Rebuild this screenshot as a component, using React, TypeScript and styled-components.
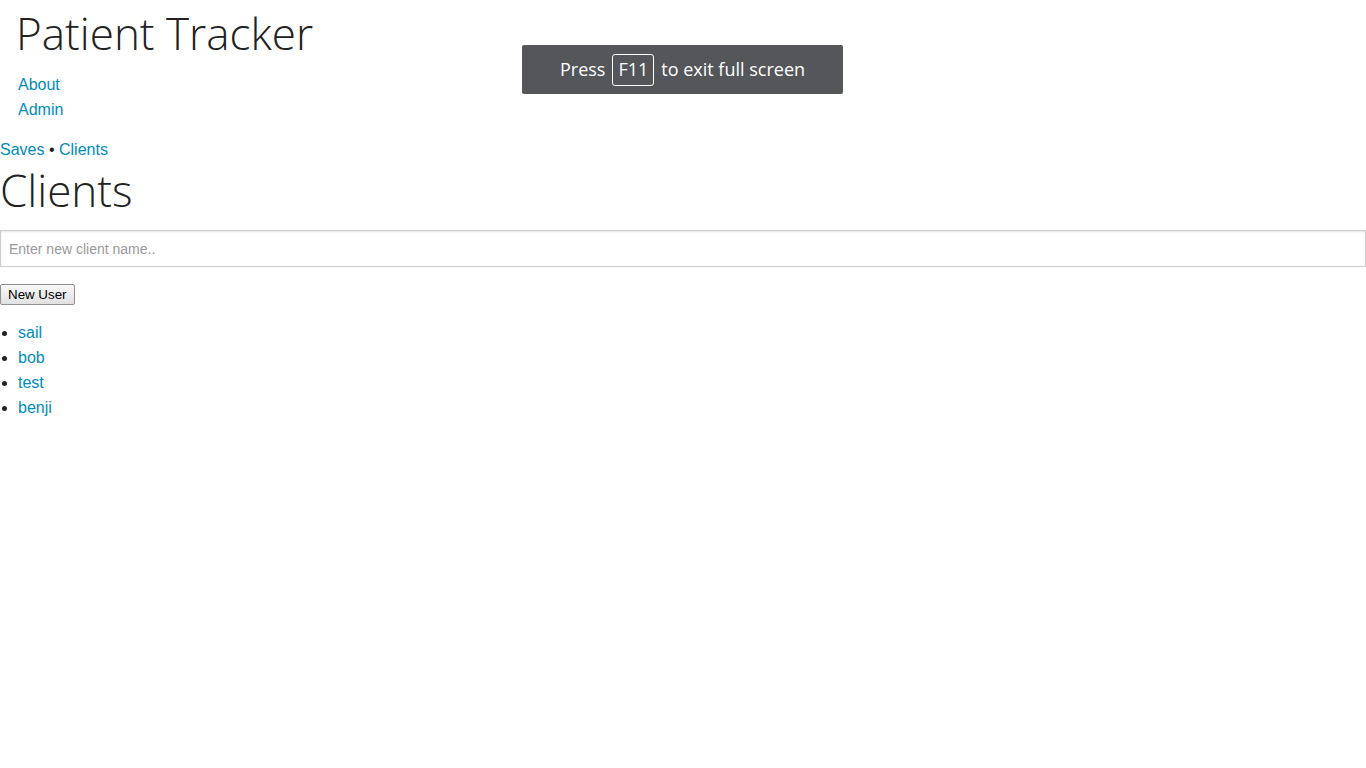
import React, { useState } from 'react';
import styled, { createGlobalStyle } from 'styled-components';

const GlobalStyle = createGlobalStyle`
  html, body {
    margin: 0;
    padding: 0;
    background: #fff;
  }
  body {
    font-family: "Liberation Sans", Arial, Helvetica, sans-serif;
    font-size: 16px;
    line-height: 1.5;
    color: #222;
  }
  * {
    box-sizing: border-box;
  }
`;

const Page = styled.div`
  position: relative;
  min-height: 100vh;
`;

const Header = styled.header`
  padding: 0 16px;
`;

const Title = styled.h1`
  margin: 0;
  padding-top: 5px;
  font-family: "Open Sans", sans-serif;
  font-weight: 300;
  font-size: 44px;
  line-height: 56px;
  color: #222;
`;

const Nav = styled.ul`
  list-style: none;
  margin: 11px 0 0 2px;
  padding: 0;
  & li {
    line-height: 25px;
  }
`;

const Link = styled.a`
  color: #008cba;
  text-decoration: none;
  cursor: pointer;
`;

const Main = styled.main`
  padding-top: 15px;
`;

const Crumbs = styled.div`
  line-height: 25px;
  color: #222;
`;

const Heading = styled.h1`
  margin: 0 0 12px;
  font-family: "Open Sans", sans-serif;
  font-weight: 300;
  font-size: 44px;
  line-height: 56px;
  color: #222;
`;

const NameInput = styled.input`
  display: block;
  width: 100%;
  height: 37px;
  margin: 0 0 17px;
  padding: 8px;
  border: 1px solid #ccc;
  box-shadow: inset 0 1px 2px rgba(0, 0, 0, 0.1);
  font-family: "Liberation Sans", Arial, sans-serif;
  font-size: 14px;
  color: #222;
  outline: none;
  &::placeholder {
    color: #999;
  }
`;

const Button = styled.button`
  display: block;
  height: 21px;
  font-family: "Liberation Sans", Arial, sans-serif;
  font-size: 13.33px;
  padding: 1px 7px;
  margin: 0;
  border: 1px solid #8f8f8f;
  border-radius: 2px;
  background: linear-gradient(#f8f8f8, #e1e1e1);
  color: #000;
  line-height: 16px;
`;

const ClientList = styled.ul`
  margin: 15px 0 0;
  padding-left: 18px;
  & li {
    line-height: 25px;
  }
`;

const Toast = styled.div`
  position: absolute;
  top: 45px;
  left: 522px;
  width: 321px;
  height: 49px;
  display: flex;
  align-items: center;
  justify-content: center;
  gap: 7px;
  background: #54565a;
  border-radius: 2px;
  color: #fff;
  font-family: "Open Sans", "DejaVu Sans", sans-serif;
  font-size: 18px;
`;

const Key = styled.span`
  display: inline-flex;
  align-items: center;
  justify-content: center;
  height: 32px;
  padding: 0 5px;
  border: 1px solid #fff;
  border-radius: 3px;
`;

export default function App(): JSX.Element {
  const [name, setName] = useState('');
  const clients = ['sail', 'bob', 'test', 'benji'];

  return (
    <Page>
      <GlobalStyle />
      <Header>
        <Title>Patient Tracker</Title>
        <Nav>
          <li><Link>About</Link></li>
          <li><Link>Admin</Link></li>
        </Nav>
      </Header>
      <Main>
        <Crumbs>
          <Link>Saves</Link> • <Link>Clients</Link>
        </Crumbs>
        <Heading>Clients</Heading>
        <NameInput
          placeholder="Enter new client name.."
          value={name}
          onChange={(e) => setName(e.target.value)}
        />
        <Button type="button">New User</Button>
        <ClientList>
          {clients.map((c) => (
            <li key={c}><Link>{c}</Link></li>
          ))}
        </ClientList>
      </Main>
      <Toast>
        <span>Press</span>
        <Key>F11</Key>
        <span>to exit full screen</span>
      </Toast>
    </Page>
  );
}
